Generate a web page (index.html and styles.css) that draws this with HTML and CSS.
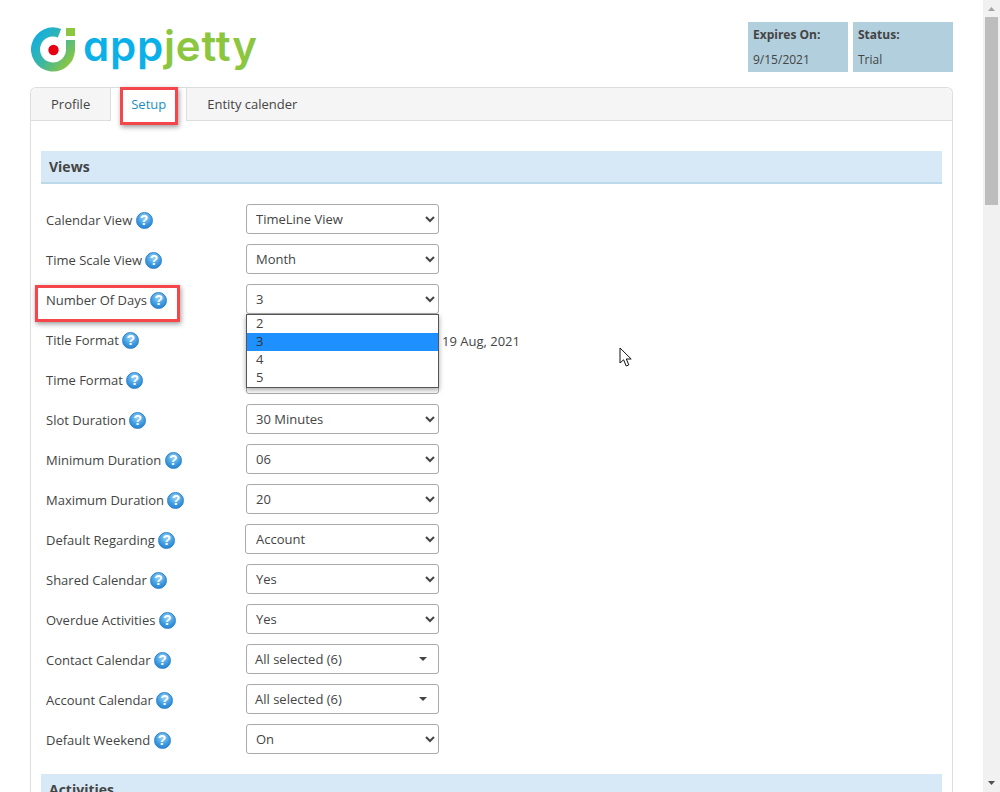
FILE: index.html
```html
<!DOCTYPE html>
<html lang="en">
<head>
<meta charset="utf-8">
<title>AppJetty Setup</title>
<link rel="stylesheet" href="styles.css">
</head>
<body>
<div class="page">
  <main class="main">
    <header class="header">
      <div class="logo">
        <svg class="logo-mark" width="46" height="46" viewBox="0 0 46 46">
          <defs>
            <linearGradient id="ring" x1="0" y1="0.1" x2="1" y2="0.9">
              <stop offset="0" stop-color="#12aee0"/>
              <stop offset="0.5" stop-color="#3cb7a0"/>
              <stop offset="1" stop-color="#8dc63f"/>
            </linearGradient>
          </defs>
          <path d="M28.5 6.2A17.5 17.5 0 1 0 39.5 23.5V13" fill="none" stroke="url(#ring)" stroke-width="9"/>
          <rect x="35" y="1" width="9" height="8" fill="#8dc63f"/>
          <circle cx="22.5" cy="23" r="5.2" fill="#e60012"/>
        </svg>
        <div class="wordmark"><span class="word-app">app</span><span class="word-jetty">jetty</span></div>
      </div>
      <div class="info">
        <div class="info-box"><b class="info-title">Expires On:</b><span class="info-value">9/15/2021</span></div>
        <div class="info-box"><b class="info-title">Status:</b><span class="info-value">Trial</span></div>
      </div>
    </header>

    <section class="card">
      <nav class="tabs">
        <a class="tab">Profile</a>
        <a class="tab tab-active">Setup</a>
        <a class="tab">Entity calender</a>
      </nav>
      <div class="card-body">
        <h2 class="section-title">Views</h2>
        <div class="rows">
          <div class="row"><label class="row-label">Calendar View <i class="help">?</i></label><select class="field"><option>TimeLine View</option></select></div>
          <div class="row"><label class="row-label">Time Scale View <i class="help">?</i></label><select class="field"><option>Month</option></select></div>
          <div class="row"><label class="row-label">Number Of Days <i class="help">?</i></label>
            <div class="field-wrap">
              <select class="field"><option>3</option></select>
              <ul class="popup">
                <li class="popup-item">2</li>
                <li class="popup-item popup-item-on">3</li>
                <li class="popup-item">4</li>
                <li class="popup-item">5</li>
              </ul>
            </div>
          </div>
          <div class="row"><label class="row-label">Title Format <i class="help">?</i></label><select class="field"><option>dd MMM, yyyy</option></select><span class="sample">19 Aug, 2021</span></div>
          <div class="row"><label class="row-label">Time Format <i class="help">?</i></label><select class="field"><option>12 Hours</option></select></div>
          <div class="row"><label class="row-label">Slot Duration <i class="help">?</i></label><select class="field"><option>30 Minutes</option></select></div>
          <div class="row"><label class="row-label">Minimum Duration <i class="help">?</i></label><select class="field"><option>06</option></select></div>
          <div class="row"><label class="row-label">Maximum Duration <i class="help">?</i></label><select class="field"><option>20</option></select></div>
          <div class="row"><label class="row-label">Default Regarding <i class="help">?</i></label><select class="field field-wide"><option>Account</option></select></div>
          <div class="row"><label class="row-label">Shared Calendar <i class="help">?</i></label><select class="field"><option>Yes</option></select></div>
          <div class="row"><label class="row-label">Overdue Activities <i class="help">?</i></label><select class="field"><option>Yes</option></select></div>
          <div class="row"><label class="row-label">Contact Calendar <i class="help">?</i></label><div class="multi"><span>All selected (6)</span><i class="caret"></i></div></div>
          <div class="row"><label class="row-label">Account Calendar <i class="help">?</i></label><div class="multi"><span>All selected (6)</span><i class="caret"></i></div></div>
          <div class="row"><label class="row-label">Default Weekend <i class="help">?</i></label><select class="field"><option>On</option></select></div>
        </div>
        <h2 class="section-title section-next">Activities</h2>
      </div>
    </section>
  </main>

  <aside class="scrollbar">
    <svg class="scroll-arrow" width="17" height="17" viewBox="0 0 17 17"><path d="M5 11L8.5 7L12 11Z" fill="#a3a3a3"/></svg>
    <div class="scroll-track"><div class="scroll-thumb"></div></div>
    <svg class="scroll-arrow" width="17" height="17" viewBox="0 0 17 17"><path d="M5 6L8.5 10L12 6Z" fill="#505050"/></svg>
  </aside>

  <div class="mark mark-setup"></div>
  <div class="mark mark-days"></div>
  <svg class="cursor" width="14" height="21" viewBox="0 0 14 21"><path d="M1 1V16L4.6 12.8L7.2 19L9.8 17.9L7.3 12H12.2Z" fill="#fff" stroke="#111" stroke-width="1"/></svg>
</div>
</body>
</html>
```
FILE: styles.css
```css
* { box-sizing: border-box; }
html, body { margin: 0; padding: 0; height: 100%; overflow: hidden; background: #fff; }
body { font-family: "Open Sans", sans-serif; font-size: 13px; color: #444; }

.page { position: relative; display: flex; height: 792px; overflow: hidden; }
.main { flex: 1; min-width: 0; padding: 22px 30px 0; }

.header { display: flex; justify-content: space-between; height: 50px; margin-bottom: 15px; }
.logo { display: flex; align-items: flex-start; margin: 5px 0 0 1px; }
.logo-mark { display: block; flex: none; }
.wordmark { margin: -7px 0 0 6px; font-family: Inter, sans-serif; font-size: 42px; line-height: 52px; font-weight: 600; letter-spacing: 0.8px; font-feature-settings: "cv11" 1; white-space: nowrap; }
.word-app { color: #0cb0e8; }
.word-jetty { color: #8cc63f; }

.info { display: flex; gap: 5px; }
.info-box { width: 100px; height: 50px; padding: 4px 5px; background: #b2cfdd; display: flex; flex-direction: column; }
.info-title { font-size: 12px; line-height: 18px; font-weight: 700; }
.info-value { margin-top: 7px; font-size: 12px; line-height: 18px; }

.card { border: 1px solid #ddd; border-bottom: 0; border-radius: 6px 6px 0 0; }
.tabs { display: flex; height: 33px; background: #f5f5f5; border-bottom: 1px solid #ddd; border-radius: 6px 6px 0 0; }
.tab { padding: 0 20px; line-height: 32px; border-right: 1px solid #ddd; color: #444; }
.tab:last-child { border-right: 0; }
.tab-active { height: 33px; background: #fff; color: #1a8fc4; }

.card-body { padding: 30px 10px 0; }
.section-title { margin: 0; height: 33px; padding: 0 8px; background: #d7e9f7; border-bottom: 2px solid #bcd9e9; font-size: 14px; line-height: 32px; font-weight: 700; color: #444; }
.section-next { margin-top: 20px; }

.rows { display: flex; flex-direction: column; gap: 10px; margin-top: 20px; }
.row { display: flex; align-items: center; height: 30px; padding-left: 5px; }
.row-label { flex: none; width: 200px; display: flex; align-items: center; padding-top: 2px; line-height: 18px; white-space: pre; }

.help { flex: none; width: 17px; height: 17px; border-radius: 50%; background: radial-gradient(circle at 50% 30%, #9ad4f7 0%, #3d9be2 55%, #1e75c0 100%); border: 1px solid #2f82c8; color: #fff; font-family: "Liberation Sans", sans-serif; font-style: normal; font-size: 14px; line-height: 15px; font-weight: 700; text-align: center; }

.field-wrap { position: relative; width: 193px; height: 30px; }
.field { width: 193px; height: 30px; flex: none; padding: 0 5px; font-family: "Open Sans", sans-serif; font-size: 13px; color: #444; background-color: #fff; border: 1px solid #aaa; border-radius: 3px; }
.field-wide { width: 194px; margin-left: -1px; padding-left: 6px; }
.sample { margin-left: 3px; padding-top: 4px; }

.multi { flex: none; width: 193px; height: 30px; display: flex; align-items: center; justify-content: space-between; padding: 0 11px 0 8px; background: #fff; border: 1px solid #aaa; border-radius: 3px; }
.caret { width: 0; height: 0; border-left: 4px solid transparent; border-right: 4px solid transparent; border-top: 4px solid #444; }

.popup { position: absolute; top: 30px; left: 0; z-index: 2; width: 193px; height: 74px; margin: 0; padding: 0; list-style: none; background: #fff; border: 1px solid #555; box-shadow: 0 2px 5px rgba(0,0,0,.35); }
.popup-item { height: 18px; padding-left: 9px; line-height: 16px; }
.popup-item-on { background: #1e90ff; color: #333; }

.scrollbar { flex: none; width: 17px; height: 792px; display: flex; flex-direction: column; background: #f1f1f1; }
.scroll-arrow { display: block; flex: none; }
.scroll-track { flex: 1; padding: 0 2px; }
.scroll-thumb { height: 188px; background: #bdbdbd; }

.mark { position: absolute; border: 3px solid #f5474b; box-shadow: 1px 2px 5px rgba(0,0,0,.4); }
.mark-setup { left: 120px; top: 87px; width: 58px; height: 38px; }
.mark-days { left: 35px; top: 285px; width: 145px; height: 37px; }
.cursor { position: absolute; left: 619px; top: 347px; }
```
